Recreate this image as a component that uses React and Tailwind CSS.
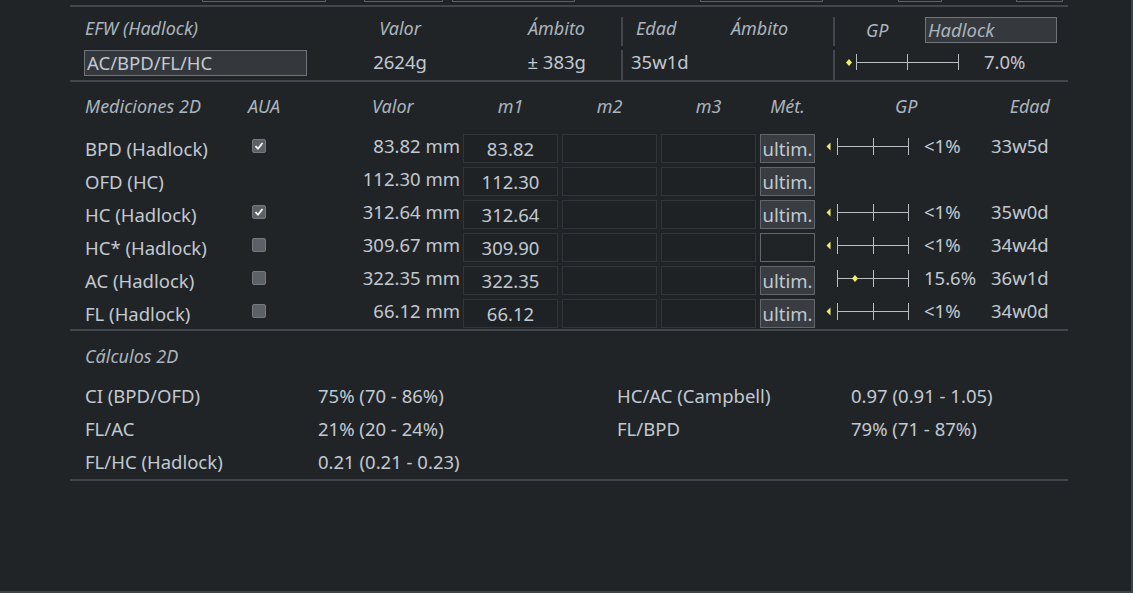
import React from 'react'

const txt = 'text-[#c1c9d1]'
const hdr = 'italic text-[#aab4be]'
const line = 'h-[2px] bg-[#42474d]'

const rows = [
	{ name: 'BPD (Hadlock)', aua: 'on', val: '83.82 mm', m1: '83.82', met: 'ultim.', gp: 'low', pct: '<1%', age: '33w5d' },
	{ name: 'OFD (HC)', aua: null, val: '112.30 mm', m1: '112.30', met: 'ultim.' },
	{ name: 'HC (Hadlock)', aua: 'on', val: '312.64 mm', m1: '312.64', met: 'ultim.', gp: 'low', pct: '<1%', age: '35w0d' },
	{ name: 'HC* (Hadlock)', aua: 'off', val: '309.67 mm', m1: '309.90', met: '', gp: 'low', pct: '<1%', age: '34w4d' },
	{ name: 'AC (Hadlock)', aua: 'off', val: '322.35 mm', m1: '322.35', met: 'ultim.', gp: 18, pct: '15.6%', age: '36w1d' },
	{ name: 'FL (Hadlock)', aua: 'off', val: '66.12 mm', m1: '66.12', met: 'ultim.', gp: 'low', pct: '<1%', age: '34w0d' },
]

const calcs = [
	['CI (BPD/OFD)', '75% (70 - 86%)', 'HC/AC (Campbell)', '0.97 (0.91 - 1.05)'],
	['FL/AC', '21% (20 - 24%)', 'FL/BPD', '79% (71 - 87%)'],
	['FL/HC (Hadlock)', '0.21 (0.21 - 0.23)', '', ''],
]

function Check({ on }) {
	return (
		<div className="w-[14px] h-[14px] rounded-[2px] bg-[#5c6168] border border-[#747a80] flex items-center justify-center">
			{on && (
				<svg width="10" height="10" viewBox="0 0 10 10">
					<path d="M1.5 5.2 L4 7.8 L8.5 2" stroke="#ffffff" strokeWidth="1.7" fill="none" />
				</svg>
			)}
		</div>
	)
}

function GpBar({ mark }) {
	return (
		<svg width="86" height="18" shapeRendering="crispEdges">
			<line x1="13" y1="9.5" x2="84" y2="9.5" stroke="#b9bec3" />
			<line x1="13.5" y1="1" x2="13.5" y2="18" stroke="#b9bec3" />
			<line x1="49.5" y1="1" x2="49.5" y2="18" stroke="#b9bec3" />
			<line x1="84.5" y1="1" x2="84.5" y2="18" stroke="#b9bec3" />
			{mark === 'low' && <polygon points="2.5,9.5 6.5,5.5 6.5,13.5" fill="#f2ee6a" shapeRendering="auto" />}
			{typeof mark === 'number' && (
				<polygon
					points={`${13 + mark},6 ${16 + mark},9.5 ${13 + mark},13 ${10 + mark},9.5`}
					fill="#f2ee6a"
					shapeRendering="auto"
				/>
			)}
		</svg>
	)
}

export default function App() {
	return (
		<div className="w-full h-screen bg-[#212427] border-r-2 border-b-2 border-[#3b4248] overflow-hidden font-['Noto_Sans',sans-serif] text-[18.5px]">
			<div className="ml-[70px] w-[998px]">
				{/* clipped inputs from the panel above */}
				<div className="flex h-[2px]">
					<div className="ml-[132px] w-[124px] border-x border-b border-[#5c6166]" />
					<div className="ml-[38px] w-[79px] border-x border-b border-[#5c6166]" />
					<div className="ml-[9px] w-[123px] border-x border-b border-[#5c6166]" />
					<div className="ml-[125px] w-[123px] border-x border-b border-[#5c6166]" />
					<div className="ml-[75px] w-[44px] border-x border-b border-[#5c6166]" />
					<div className="ml-[74px] w-[47px] border-x border-b border-[#5c6166]" />
				</div>
				<div className={`mt-[3px] ${line}`} />

				{/* EFW */}
				<div className="mt-[10px] flex h-[29px] items-center text-[18px]">
					<div className={`w-[270px] pl-[15px] pb-[6px] ${hdr}`}>EFW (Hadlock)</div>
					<div className={`w-[120px] text-center pb-[6px] ${hdr}`}>Valor</div>
					<div className={`w-[161px] text-right pr-[36px] pb-[6px] ${hdr}`}>Ámbito</div>
					<div className="w-[2px] h-full bg-[#42474d]" />
					<div className="w-[210px] flex pb-[6px]">
						<span className={`w-[95px] pl-[13px] ${hdr}`}>Edad</span>
						<span className={`ml-[13px] ${hdr}`}>Ámbito</span>
					</div>
					<div className="w-[2px] h-full bg-[#42474d]" />
					<div className="flex items-center self-start">
						<span className={`ml-[31px] w-[24px] leading-[24px] ${hdr}`}>GP</span>
						<div className={`ml-[35px] w-[132px] h-[26px] bg-[#35393d] border border-[#6f747a] pl-[2px] leading-[24px] ${hdr} text-[18.5px]`}>
							Hadlock
						</div>
					</div>
				</div>
				<div className={`mt-[4px] flex h-[30px] ${txt}`}>
					<div className="w-[270px] pl-[14px]">
						<div className="w-[223px] h-[26px] bg-[#34383c] border border-[#6f747a] pl-[2px] leading-[24px]">AC/BPD/FL/HC</div>
					</div>
					<div className="w-[120px] text-center leading-[24px]">2624g</div>
					<div className="w-[161px] text-right pr-[35px] leading-[24px]">± 383g</div>
					<div className="w-[2px] h-full bg-[#42474d]" />
					<div className="w-[210px] pl-[8px] leading-[24px]">35w1d</div>
					<div className="w-[2px] h-full bg-[#42474d]" />
					<div className="flex items-start">
						<svg width="115" height="18" className="ml-[10px] mt-[3px]" shapeRendering="crispEdges">
							<line x1="11" y1="9.5" x2="113" y2="9.5" stroke="#b9bec3" />
							<line x1="11.5" y1="1" x2="11.5" y2="17" stroke="#b9bec3" />
							<line x1="62.5" y1="1" x2="62.5" y2="17" stroke="#b9bec3" />
							<line x1="113.5" y1="1" x2="113.5" y2="17" stroke="#b9bec3" />
							<polygon points="4,6 7,9.5 4,13 1,9.5" fill="#f2ee6a" shapeRendering="auto" />
						</svg>
						<span className="ml-[24px] leading-[24px]">7.0%</span>
					</div>
				</div>
				<div className={line} />

				{/* Mediciones 2D */}
				<div className={`mt-[14px] flex h-[20px] leading-[20px] text-[18px] ${hdr}`}>
					<div className="w-[175px] pl-[15px]">Mediciones 2D</div>
					<div className="w-[45px] pl-[3px]">AUA</div>
					<div className="w-[173px] pl-[82px]">Valor</div>
					<div className="w-[95px] text-center">m1</div>
					<div className="ml-[4px] w-[95px] text-center">m2</div>
					<div className="ml-[4px] w-[95px] text-center">m3</div>
					<div className="ml-[4px] w-[55px] text-center">Mét.</div>
					<div className="ml-[9px] w-[167px] pl-[71px]">GP</div>
					<div className="w-[59px] text-right">Edad</div>
				</div>
				<div className={`mt-[18px] flex flex-col gap-[4px] ${txt}`}>
					{rows.map((r) => (
						<div key={r.name} className="flex h-[29px] items-center">
							<div className="w-[175px] pl-[15px]">{r.name}</div>
							<div className="w-[21px] pl-[7px] pb-[5px]">{r.aua && <Check on={r.aua === 'on'} />}</div>
							<div className="w-[194px] text-right pb-[5px]">{r.val}</div>
							<div className="ml-[3px] w-[95px] h-full bg-[#1f2225] border border-[#30353a] text-center leading-[27px]">{r.m1}</div>
							<div className="ml-[4px] w-[95px] h-full bg-[#1f2225] border border-[#30353a]" />
							<div className="ml-[4px] w-[95px] h-full bg-[#1f2225] border border-[#30353a]" />
							<div
								className={`ml-[4px] w-[55px] h-full border border-[#62676c] text-center leading-[27px] ${r.met ? 'bg-[#393d41]' : 'bg-[#212427]'}`}>
								{r.met}
							</div>
							{r.gp ? (
								<>
									<div className="ml-[9px] pb-[5px] flex items-center">
										<GpBar mark={r.gp} />
									</div>
									<div className="ml-[14px] w-[67px] pb-[5px]">{r.pct}</div>
									<div className="pb-[5px]">{r.age}</div>
								</>
							) : null}
						</div>
					))}
				</div>
				<div className={`mt-[1px] ${line}`} />

				{/* Cálculos 2D */}
				<div className={`mt-[15px] h-[20px] leading-[20px] pl-[15px] text-[18px] ${hdr}`}>Cálculos 2D</div>
				<div className={`mt-[13px] ${txt}`}>
					{calcs.map((c) => (
						<div key={c[0]} className="flex h-[33px] items-center pl-[15px]">
							<div className="w-[233px]">{c[0]}</div>
							<div className="w-[299px]">{c[1]}</div>
							<div className="w-[234px]">{c[2]}</div>
							<div>{c[3]}</div>
						</div>
					))}
				</div>
				<div className={`mt-[1px] ${line}`} />
			</div>
		</div>
	)
}
